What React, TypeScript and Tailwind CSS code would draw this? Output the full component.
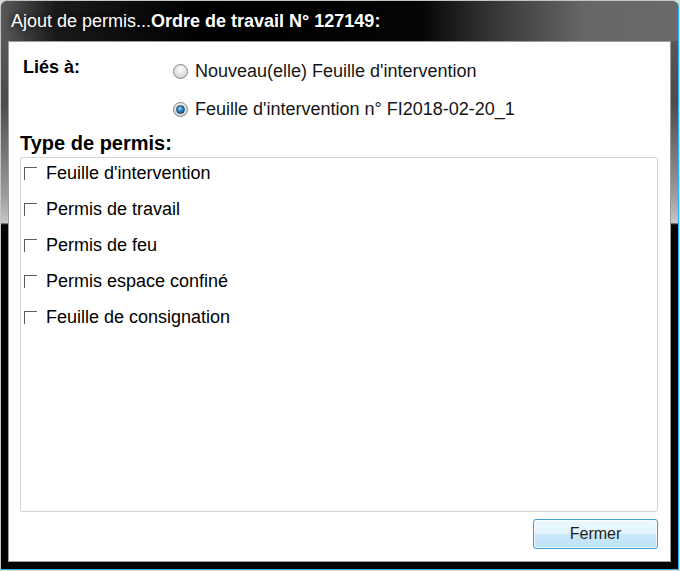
import React from "react";

const permitTypes = [
  "Feuille d'intervention",
  "Permis de travail",
  "Permis de feu",
  "Permis espace confiné",
  "Feuille de consignation",
];

function Radio({ checked }: { checked?: boolean }) {
  return (
    <span className="w-[15px] h-[15px] shrink-0 rounded-full border border-[#858585] bg-[radial-gradient(circle_at_50%_35%,#fdfdfd_0%,#e0e0e0_55%,#c0c0c0_100%)] flex items-center justify-center">
      {checked && (
        <span className="w-[9px] h-[9px] rounded-full border border-[#1c3f5e] bg-[radial-gradient(circle_at_40%_35%,#8fd3f6_0%,#2a86c8_45%,#0f3f6b_100%)]" />
      )}
    </span>
  );
}

function Checkbox() {
  return <span className="w-[13px] h-[13px] shrink-0 border-t border-l border-[#5c5c5c] bg-white" />;
}

export default function App() {
  return (
    <div className="w-[680px] h-[571px] bg-[#dcdcdc] font-['Liberation_Sans',Arial,sans-serif]">
      <div className="w-[679px] h-[570px] flex flex-col rounded-t-[7px] border-t border-l border-[#c4c4c4] border-r border-b border-r-[#2fb3e6] border-b-[#2fb3e6] bg-[linear-gradient(to_bottom,#5e5e5e_0%,#4c4c4c_18%,#9a9a9a_34%,#c6c6c6_39%,#050505_39.4%,#050505_100%)] overflow-hidden">
        {/* title bar */}
        <div className="h-[40px] shrink-0 flex items-center pl-[10px] rounded-t-[6px] bg-[linear-gradient(to_right,#5a5a5a_0%,#1a1a1a_8%,#000_30%,#050505_62%,#3c3c3c_74%,#666_86%,#6a6a6a_100%)]">
          <span className="text-[18px] leading-[20px] text-white [text-shadow:0_0_6px_rgba(0,0,0,0.9)]">
            Ajout de permis...<span className="font-bold">Ordre de travail N° 127149:</span>
          </span>
        </div>

        {/* client area */}
        <div className="flex-1 flex pl-[7px] pr-[7px] pb-[7px]">
          <div className="flex-1 border border-[#9c9c9c] bg-white flex flex-col pl-[11px] pr-[12px]">
            <div className="flex items-start mt-[15px]">
              <div className="w-[153px] pl-[3px] text-[18px] leading-[20px] font-bold text-black">Liés à:</div>
              <div className="flex flex-col gap-[18px] mt-[4px]">
                <div className="h-[20px] flex items-center gap-[7px]">
                  <Radio />
                  <span className="text-[18px] leading-[20px] text-[#151515]">Nouveau(elle) Feuille d'intervention</span>
                </div>
                <div className="h-[20px] flex items-center gap-[7px]">
                  <Radio checked />
                  <span className="text-[18px] leading-[20px] text-[#151515]">Feuille d'intervention n° FI2018-02-20_1</span>
                </div>
              </div>
            </div>

            <div className="mt-[13px] text-[20px] leading-[23px] font-bold text-black">Type de permis:</div>

            <div className="mt-[2px] h-[355px] border border-[#d4d4d4] rounded-[2px] flex flex-col gap-[14px] pt-[4px] pl-[3px]">
              {permitTypes.map((label) => (
                <div key={label} className="h-[22px] flex items-center gap-[9px]">
                  <Checkbox />
                  <span className="text-[18px] leading-[20px] text-black">{label}</span>
                </div>
              ))}
            </div>

            <div className="flex justify-end mt-[7px]">
              <button className="w-[125px] h-[30px] rounded-[3px] border border-[#3c9dd8] bg-[linear-gradient(to_bottom,#eef8fe_0%,#e2f2fc_48%,#c9e8f9_52%,#bde2f6_100%)] shadow-[inset_0_0_0_1px_rgba(255,255,255,0.7)] text-[16px] leading-[20px] text-[#1e1e1e]">
                Fermer
              </button>
            </div>
          </div>
        </div>
      </div>
    </div>
  );
}
